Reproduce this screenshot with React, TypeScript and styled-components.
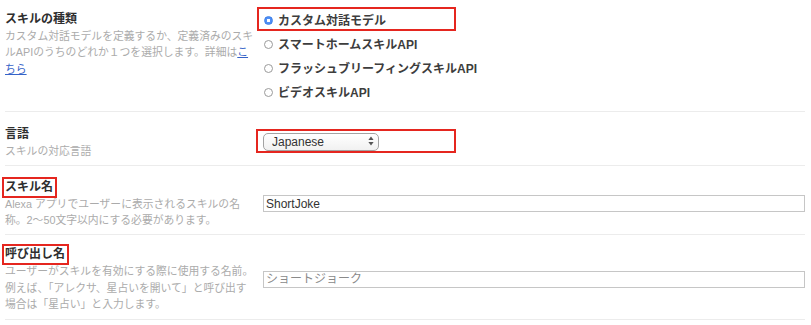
import styled, { createGlobalStyle } from "styled-components";

const GlobalStyle = createGlobalStyle`
  html, body {
    margin: 0;
    padding: 0;
    background: #fff;
  }
  body {
    font-family: "Liberation Sans", "Noto Sans CJK JP", sans-serif;
    color: #333;
  }
`;

const skillTypes = [
  "カスタム対話モデル",
  "スマートホームスキルAPI",
  "フラッシュブリーフィングスキルAPI",
  "ビデオスキルAPI",
];

const App = () => {
  return (
    <>
      <GlobalStyle />
      <StyledPage>
        <StyledRow $align="start" $pad="7px 0 8px">
          <StyledLabel $offset={3.5}>
            <StyledTitle>スキルの種類</StyledTitle>
            <StyledDesc>
              カスタム対話モデルを定義するか、定義済みのスキルAPIのうちのどれか１つを選択します。詳細は
              <a href="#">こちら</a>
            </StyledDesc>
          </StyledLabel>
          <StyledField>
            {skillTypes.map((label, i) => (
              <StyledOption key={label} $highlight={i === 0}>
                <StyledRadio $checked={i === 0} />
                {label}
              </StyledOption>
            ))}
          </StyledField>
        </StyledRow>

        <StyledRow $pad="14px 0 5px">
          <StyledLabel>
            <StyledTitle>言語</StyledTitle>
            <StyledDesc>スキルの対応言語</StyledDesc>
          </StyledLabel>
          <StyledField>
            <StyledSelectBox>
              <StyledSelectWrap>
                <select defaultValue="ja-JP">
                  <option value="en-US">English (U.S.)</option>
                  <option value="en-GB">English (U.K.)</option>
                  <option value="de-DE">German</option>
                  <option value="ja-JP">Japanese</option>
                </select>
                <StyledArrows width="6" height="10" viewBox="0 0 6 10">
                  <path d="M3 0.5 L5.6 4 H0.4 Z" fill="#555" />
                  <path d="M3 9.5 L5.6 6 H0.4 Z" fill="#555" />
                </StyledArrows>
              </StyledSelectWrap>
            </StyledSelectBox>
          </StyledField>
        </StyledRow>

        <StyledRow $pad="13px 0 5px">
          <StyledLabel>
            <StyledTitle $boxed>スキル名</StyledTitle>
            <StyledDesc>
              Alexa アプリでユーザーに表示されるスキルの名称。2〜50文字以内にする必要があります。
            </StyledDesc>
          </StyledLabel>
          <StyledField>
            <StyledInput type="text" defaultValue="ShortJoke" />
          </StyledField>
        </StyledRow>

        <StyledRow $pad="11.5px 0 6px">
          <StyledLabel>
            <StyledTitle $boxed>呼び出し名</StyledTitle>
            <StyledDesc>
              ユーザーがスキルを有効にする際に使用する名前。例えば、「アレクサ、星占いを開いて」と呼び出す場合は「星占い」と入力します。
            </StyledDesc>
          </StyledLabel>
          <StyledField>
            <StyledInput type="text" placeholder="ショートジョーク" />
          </StyledField>
        </StyledRow>
      </StyledPage>
    </>
  );
};

const StyledPage = styled.div`
  padding: 0 6px 0 5px;
`;

const StyledRow = styled.div<{ $align?: string; $pad: string }>`
  display: grid;
  grid-template-columns: 251px 1fr;
  align-items: ${({ $align }) => $align || "center"};
  padding: ${({ $pad }) => $pad};
  border-bottom: 1px solid #ececec;
`;

const StyledLabel = styled.div<{ $offset?: number }>`
  padding-top: ${({ $offset }) => $offset || 0}px;
`;

const StyledTitle = styled.div<{ $boxed?: boolean }>`
  width: fit-content;
  font-size: 12px;
  line-height: 17px;
  font-weight: bold;
  color: #2e2e2e;
  ${({ $boxed }) =>
    $boxed &&
    `
    border: 2px solid #e5261f;
    margin: -2px 0 -2px -3px;
    padding: 0 2px 0 1px;
  `}
`;

const StyledDesc = styled.div`
  width: 250px;
  font-size: 10.8px;
  line-height: 16.5px;
  color: #ababab;

  & a {
    color: #3563c8;
    text-decoration: underline;
  }
`;

const StyledField = styled.div`
  padding-left: 7px;
  display: flex;
  flex-direction: column;
`;

const StyledOption = styled.label<{ $highlight?: boolean }>`
  display: flex;
  align-items: center;
  box-sizing: border-box;
  width: 199px;
  height: 24px;
  margin-left: -6px;
  padding-left: 5px;
  border: 2px solid ${({ $highlight }) => ($highlight ? "#e5261f" : "transparent")};
  font-size: 12px;
  font-weight: bold;
  color: #3d3d3d;
  white-space: nowrap;
  cursor: pointer;
`;

const StyledRadio = styled.span<{ $checked?: boolean }>`
  flex: none;
  box-sizing: border-box;
  width: 9px;
  height: 9px;
  margin: 3px 5px 0 0;
  border-radius: 50%;
  ${({ $checked }) =>
    $checked
      ? `
    background: radial-gradient(circle, #fff 0 1.4px, #4f8ff5 1.9px);
    border: 1px solid #3c7ee8;
  `
      : `
    background: #fff;
    border: 1px solid #9a9a9a;
  `}
`;

const StyledSelectBox = styled.div`
  box-sizing: border-box;
  width: 200px;
  height: 24px;
  margin: 0 0 4px -7px;
  padding: 1px 5px;
  border: 2px solid #e5261f;
`;

const StyledSelectWrap = styled.div`
  position: relative;
  width: 116px;
  height: 18px;

  & select {
    appearance: none;
    -webkit-appearance: none;
    box-sizing: border-box;
    width: 100%;
    height: 100%;
    margin: 0;
    padding: 0 0 0 8px;
    border: 1px solid #a3a3a3;
    border-radius: 5px;
    background: linear-gradient(#ffffff, #f1f1f1);
    font-family: "Liberation Sans", sans-serif;
    font-size: 12px;
    color: #333;
    outline: none;
  }
`;

const StyledArrows = styled.svg`
  position: absolute;
  right: 5px;
  top: 4px;
  pointer-events: none;
`;

const StyledInput = styled.input`
  box-sizing: border-box;
  width: 100%;
  height: 17px;
  margin: 0;
  padding: 0 2px;
  border: 1px solid #c6c6c6;
  border-radius: 0;
  font-family: "Liberation Sans", "Noto Sans CJK JP", sans-serif;
  font-size: 12px;
  color: #333;
  outline: none;

  &::placeholder {
    color: #8a8a8a;
  }
`;

export default App;
